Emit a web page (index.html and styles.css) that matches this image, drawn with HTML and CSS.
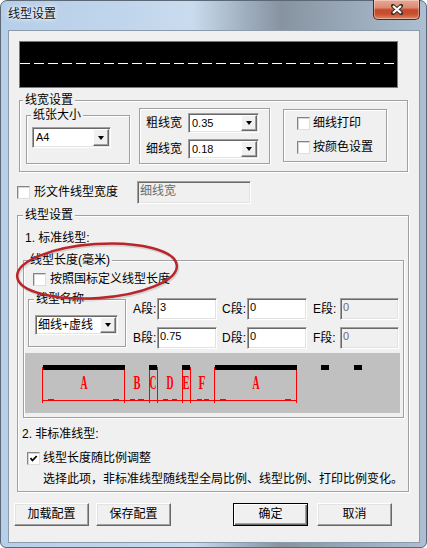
FILE: index.html
```html
<!DOCTYPE html>
<html lang="zh-CN">
  <head>
    <meta charset="UTF-8" />
    <title>线型设置</title>
    <link rel="stylesheet" href="styles.css">
  </head>
  <body>
    <div class="window">
      <div class="titlebar">
        <span class="title">线型设置</span>
        <button class="close" title="关闭">
          <svg width="12" height="11" viewBox="0 0 12 11">
            <path d="M2 2L10 9M10 2L2 9" stroke="#3d2e2a" stroke-width="4.2" stroke-linecap="round" />
            <path d="M2 2L10 9M10 2L2 9" stroke="#ffffff" stroke-width="2.2" />
          </svg>
        </button>
      </div>

      <div class="client">
        <!-- 线型预览 -->
        <div class="preview">
          <svg width="377" height="45" viewBox="0 0 377 45">
            <line x1="0" y1="21.5" x2="377" y2="21.5" stroke="#ffffff" stroke-dasharray="10 4" />
          </svg>
        </div>

        <div class="group group-width">
          <div class="legend">线宽设置</div>
          <div class="width-row">
            <div class="group group-paper">
              <div class="legend">纸张大小</div>
              <div class="combo combo-paper">
                <span class="combo-value">A4</span>
                <span class="combo-drop"></span>
              </div>
            </div>

            <div class="box box-lines">
              <div class="field-row">
                <span class="label">粗线宽</span>
                <div class="combo combo-line">
                  <span class="combo-value">0.35</span>
                  <span class="combo-drop"></span>
                </div>
              </div>
              <div class="field-row">
                <span class="label">细线宽</span>
                <div class="combo combo-line">
                  <span class="combo-value">0.18</span>
                  <span class="combo-drop"></span>
                </div>
              </div>
            </div>

            <div class="box box-print">
              <label class="check-row"><span class="check"></span>细线打印</label>
              <label class="check-row"><span class="check"></span>按颜色设置</label>
            </div>
          </div>
        </div>

        <div class="shape-row">
          <label class="check-row"><span class="check"></span>形文件线型宽度</label>
          <div class="textbox disabled shape-input">细线宽</div>
        </div>

        <div class="group group-type">
          <div class="legend">线型设置</div>
          <div class="section-title">1. 标准线型:</div>

          <div class="group group-length">
            <div class="legend">线型长度(毫米)</div>
            <label class="check-row gb-check"><span class="check"></span>按照国标定义线型长度</label>

            <div class="name-row">
              <div class="group group-name">
                <div class="legend">线型名称</div>
                <div class="combo combo-name">
                  <span class="combo-value cjk">细线+虚线</span>
                  <span class="combo-drop"></span>
                </div>
              </div>

              <div class="seg-grid">
                <span class="seg-label">A段:</span>
                <div class="textbox">3</div>
                <span class="seg-label seg-c">C段:</span>
                <div class="textbox">0</div>
                <span class="seg-label seg-e">E段:</span>
                <div class="textbox disabled">0</div>

                <span class="seg-label">B段:</span>
                <div class="textbox">0.75</div>
                <span class="seg-label seg-c">D段:</span>
                <div class="textbox">0</div>
                <span class="seg-label seg-e">F段:</span>
                <div class="textbox disabled">0</div>
              </div>
            </div>

            <svg class="diagram" width="375" height="60" viewBox="0 0 375 60">
              <rect width="375" height="60" fill="#c0c0c0" />
              <path d="M17.5 14V50M99.5 14V50M124.5 14V50M132.5 14V50M157.5 14V50M165.5 14V50M189.5 14V50M271.5 14V50M17 47.5H272"
                    stroke="#ff0000" fill="none" />
              <g fill="#000000">
                <rect x="18" y="12" width="82" height="5" />
                <rect x="124" y="12" width="8" height="5" />
                <rect x="157" y="12" width="8" height="5" />
                <rect x="190" y="12" width="82" height="5" />
                <rect x="296" y="12" width="8" height="5" />
                <rect x="329" y="12" width="8" height="5" />
              </g>
              <g fill="#ff0000">
                <rect x="23" y="46" width="6" height="1" />
                <rect x="88" y="46" width="6" height="1" />
                <rect x="105" y="46" width="5" height="1" />
                <rect x="113" y="46" width="6" height="1" />
                <rect x="138" y="46" width="5" height="1" />
                <rect x="147" y="46" width="5" height="1" />
                <rect x="172" y="46" width="5" height="1" />
                <rect x="179" y="46" width="5" height="1" />
                <rect x="195" y="46" width="6" height="1" />
                <rect x="260" y="46" width="6" height="1" />
              </g>
              <g class="seg-letters" fill="#ff0000" text-anchor="middle">
                <text x="59" y="36" textLength="7" lengthAdjust="spacingAndGlyphs">A</text>
                <text x="112" y="36" textLength="7" lengthAdjust="spacingAndGlyphs">B</text>
                <text x="128" y="36" textLength="7" lengthAdjust="spacingAndGlyphs">C</text>
                <text x="145" y="36" textLength="7" lengthAdjust="spacingAndGlyphs">D</text>
                <text x="161" y="36" textLength="7" lengthAdjust="spacingAndGlyphs">E</text>
                <text x="177" y="36" textLength="7" lengthAdjust="spacingAndGlyphs">F</text>
                <text x="231" y="36" textLength="7" lengthAdjust="spacingAndGlyphs">A</text>
              </g>
            </svg>
          </div>

          <div class="section-title two">2. 非标准线型:</div>
          <label class="check-row scale-check">
            <span class="check">
              <svg width="11" height="11" viewBox="0 0 11 11">
                <path d="M2.5 5.2L4.5 7.5L8.7 3" fill="none" stroke="#000000" stroke-width="1.8" />
              </svg>
            </span>线型长度随比例调整</label>
          <div class="note">选择此项，非标准线型随线型全局比例、线型比例、打印比例变化。</div>
        </div>

        <div class="buttons">
          <button class="btn">加载配置</button>
          <button class="btn">保存配置</button>
          <button class="btn btn-default btn-ok">确定</button>
          <button class="btn btn-cancel">取消</button>
        </div>

        <!-- 红色标注圈 -->
        <svg class="annotation" width="410" height="511" viewBox="0 0 410 511">
          <ellipse cx="89" cy="241.5" rx="80" ry="27" transform="rotate(-4 89 241.5)"
                   fill="none" stroke="rgba(0,0,0,0.12)" stroke-width="3" />
          <ellipse cx="88" cy="240" rx="80" ry="27" transform="rotate(-4 88 240)"
                   fill="none" stroke="#b9252b" stroke-width="2.5" />
        </svg>
      </div>
    </div>
  </body>
</html>
```

FILE: styles.css
```css
* {
  box-sizing: border-box;
}

body {
  margin: 0;
  background: #ffffff;
  font-family: "Liberation Sans", "Noto Sans CJK SC", sans-serif;
  font-size: 12px;
  line-height: 15px;
  color: #000;
  white-space: nowrap;
}

.window {
  width: 427px;
  height: 548px;
  padding: 0 6px 4px 7px;
  border: 1px solid #5a6878;
  border-radius: 7px 7px 6px 6px;
  background: linear-gradient(90deg, #b6cee8 0%, #c1d6ec 30%, #c9dbee 45%, #9eadbd 58%, #87939f 66%, #97a6b5 80%, #adbfd1 100%);
  display: flex;
  flex-direction: column;
}

.titlebar {
  height: 29px;
  display: flex;
  align-items: flex-start;
}

.title {
  padding-top: 6px;
  color: #111;
  text-shadow: 0 0 6px #fff, 0 0 3px #fff;
}

.close {
  margin: -1px 0 0 auto;
  width: 47px;
  height: 20px;
  padding: 0;
  border: 1px solid #5b2418;
  border-top: none;
  border-radius: 0 0 5px 5px;
  background: linear-gradient(#e9a896 0%, #dc8a72 40%, #c44a2a 52%, #c8502f 75%, #db8b68 100%);
  box-shadow: inset 0 0 0 1px rgba(255, 255, 255, 0.35);
  display: flex;
  align-items: center;
  justify-content: center;
}

.client {
  position: relative;
  height: 513px;
  background: #f0f0f0;
  border: 1px solid #8b9bab;
  display: flex;
  flex-direction: column;
  align-items: flex-start;
}

.preview {
  margin: 10px 0 0 10px;
  width: 379px;
  height: 47px;
  background: #000;
  border: 1px solid #7a7a7a;
}

.preview svg {
  display: block;
}

/* group boxes */
.group,
.box {
  border: 1px solid #a0a0a0;
  box-shadow: inset 1px 1px 0 #fff, 1px 1px 0 #fff;
  display: flex;
  flex-direction: column;
  align-items: flex-start;
  flex: none;
}

.legend {
  margin: -8px 0 0 4px;
  padding: 0 2px;
  background: #f0f0f0;
}

.group-width {
  margin: 12px 0 0 10px;
  width: 389px;
  height: 72px;
}
.group-width > .legend {
  margin-left: 3px;
}

.width-row {
  display: flex;
  align-items: flex-start;
}

.group-paper {
  margin: 7px 0 0 6px;
  width: 104px;
  height: 49px;
}

.box-lines {
  margin-left: 9px;
  width: 131px;
  height: 56px;
  padding-top: 4px;
  gap: 6px;
}

.field-row {
  display: flex;
  align-items: center;
}

.field-row .label {
  width: 42px;
  margin-right: 6px;
  text-align: right;
}

.box-print {
  margin: 1px 0 0 13px;
  width: 104px;
  height: 53px;
  padding: 7px 0 0 13px;
  gap: 11px;
}
.box-print .check-row {
  gap: 3px;
}

/* controls */
.combo {
  display: flex;
  padding: 1px;
  background: #fff;
  border: 1px solid;
  border-color: #a0a0a0 #fff #fff #a0a0a0;
  box-shadow: inset 1px 1px 0 #696969, inset -1px -1px 0 #e3e3e3;
  flex: none;
}

.combo-value {
  flex: 1;
  padding-left: 2px;
  font-size: 11px;
  display: flex;
  align-items: center;
}
.combo-value.cjk {
  font-size: 12px;
  padding-left: 1px;
}

.combo-drop {
  width: 16px;
  background: #f0f0f0;
  border: 1px solid;
  border-color: #fff #696969 #696969 #fff;
  box-shadow: inset -1px -1px 0 #a0a0a0;
  display: flex;
  align-items: center;
  justify-content: center;
}
.combo-drop::after {
  content: "";
  border-top: 4px solid #000;
  border-left: 3.5px solid transparent;
  border-right: 3.5px solid transparent;
}

.combo-paper {
  margin: 4px 0 0 5px;
  width: 79px;
  height: 21px;
}

.combo-line {
  width: 71px;
  height: 20px;
}

.combo-name {
  margin: 8px 0 0 6px;
  width: 83px;
  height: 20px;
}

.textbox {
  padding: 1px 0 0 2px;
  background: #fff;
  border: 1px solid;
  border-color: #a0a0a0 #fff #fff #a0a0a0;
  box-shadow: inset 1px 1px 0 #696969, inset -1px -1px 0 #e3e3e3;
  font-size: 11px;
}
.textbox.disabled {
  background: #f0f0f0;
  color: #6d6d6d;
}

.check-row {
  display: flex;
  align-items: center;
  gap: 4px;
  height: 13px;
}

.check {
  width: 13px;
  height: 13px;
  flex: none;
  background: #fff;
  border: 1px solid;
  border-color: #858585 #dedede #dedede #858585;
  box-shadow: inset 1px 1px 0 #d4d4d4;
  display: flex;
  align-items: center;
  justify-content: center;
}
.check svg {
  display: block;
}

.shape-row {
  margin: 9px 0 0 8px;
  height: 23px;
  display: flex;
  align-items: center;
}

.shape-input {
  margin-left: 19px;
  width: 114px;
  height: 23px;
  font-size: 12px;
  padding-top: 2px;
}

/* 线型设置 */
.group-type {
  margin: 11px 0 0 8px;
  width: 392px;
  height: 277px;
}
.group-type > .legend {
  margin-left: 5px;
}

.section-title {
  margin: 8px 0 0 7px;
}
.section-title.two {
  margin: 9px 0 0 4px;
}

.group-length {
  margin: 14px 0 0 5px;
  width: 381px;
  height: 158px;
}

.gb-check {
  margin: 5px 0 0 9px;
}

.name-row {
  margin-top: 13px;
  display: flex;
  align-items: flex-start;
}

.group-name {
  margin-left: 4px;
  width: 98px;
  height: 48px;
}
.group-name > .legend {
  margin-left: 5px;
}

.seg-grid {
  margin: -1px 0 0 7px;
  display: grid;
  grid-template-columns: 24px 60px 30px 60px 33px 59px;
  grid-template-rows: 22px 22px;
  row-gap: 7px;
}

.seg-label {
  align-self: center;
}
.seg-c {
  padding-left: 5px;
}
.seg-e {
  padding-left: 6px;
}

.diagram {
  display: block;
  margin: 4px 0 0 1px;
}

.seg-letters {
  font-family: "Liberation Serif", serif;
  font-weight: bold;
  font-size: 19px;
}

.scale-check {
  margin: 10px 0 0 9px;
  gap: 3px;
}

.note {
  margin: 7px 0 0 25px;
}

/* bottom buttons */
.buttons {
  margin: 11px 0 0 5px;
  display: flex;
}

.btn {
  width: 75px;
  height: 23px;
  padding: 0;
  font: inherit;
  color: #000;
  background: #f0f0f0;
  border: 1px solid;
  border-color: #fff #696969 #696969 #fff;
  box-shadow: inset -1px -1px 0 #a0a0a0, inset 1px 1px 0 #e3e3e3;
}
.btn + .btn {
  margin-left: 7px;
}
.btn.btn-ok {
  margin-left: 62px;
}
.btn.btn-cancel {
  margin-left: 9px;
}
.btn-default {
  border-color: #000;
  box-shadow: inset 1px 1px 0 #fff, inset -1px -1px 0 #696969, inset -2px -2px 0 #a0a0a0;
}

.annotation {
  position: absolute;
  left: 0;
  top: 0;
  pointer-events: none;
}
```
